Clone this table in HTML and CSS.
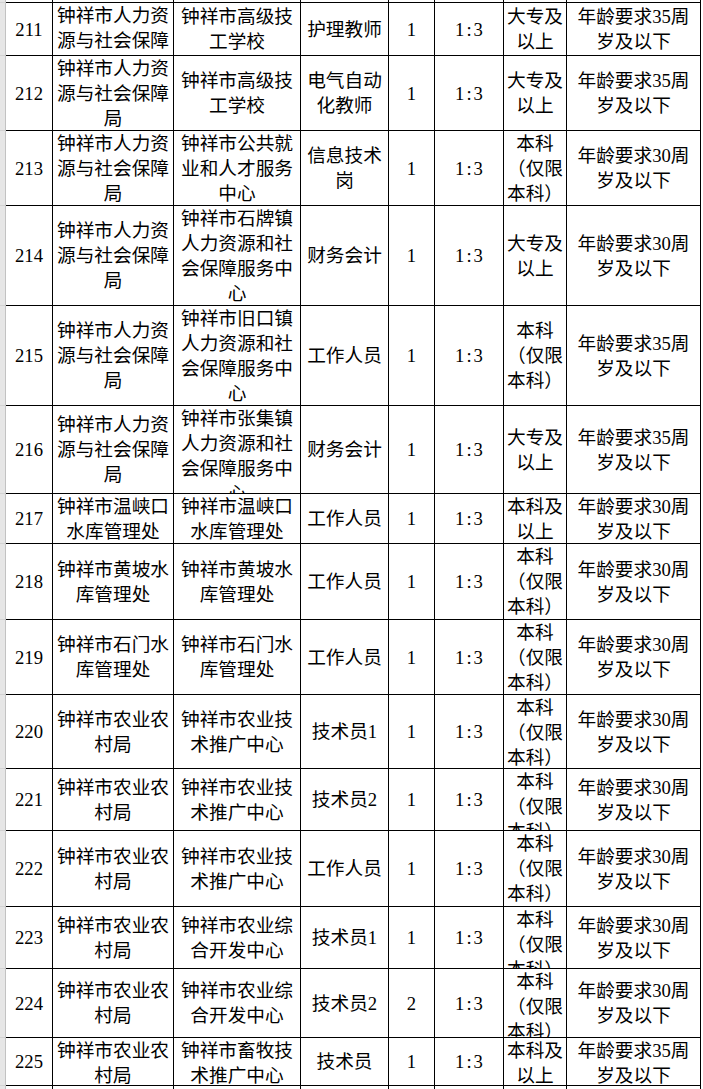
FILE: index.html
```html
<!DOCTYPE html>
<html lang="zh-CN">
<head>
<meta charset="utf-8">
<title>表格</title>
<link rel="stylesheet" href="styles.css">
</head>
<body>
<div class="sheet">
  <div class="g"></div><div class="c"></div><div class="c"></div><div class="c"></div><div class="c"></div><div class="c"></div><div class="c"></div><div class="c"></div><div class="c"></div>

  <div class="g"></div><div class="c"><span>211</span></div><div class="c"><span>钟祥市人力资源与社会保障局</span></div><div class="c"><span>钟祥市高级技工学校</span></div><div class="c"><span>护理教师</span></div><div class="c"><span>1</span></div><div class="c ratio"><span>1:3</span></div><div class="c"><span>大专及以上</span></div><div class="c"><span>年龄要求35周岁及以下</span></div>

  <div class="g"></div><div class="c"><span>212</span></div><div class="c"><span>钟祥市人力资源与社会保障局</span></div><div class="c"><span>钟祥市高级技工学校</span></div><div class="c"><span>电气自动化教师</span></div><div class="c"><span>1</span></div><div class="c ratio"><span>1:3</span></div><div class="c"><span>大专及以上</span></div><div class="c"><span>年龄要求35周岁及以下</span></div>

  <div class="g"></div><div class="c"><span>213</span></div><div class="c"><span>钟祥市人力资源与社会保障局</span></div><div class="c"><span>钟祥市公共就业和人才服务中心</span></div><div class="c"><span>信息技术岗</span></div><div class="c"><span>1</span></div><div class="c ratio"><span>1:3</span></div><div class="c"><span>本科（仅限本科）</span></div><div class="c"><span>年龄要求30周岁及以下</span></div>

  <div class="g"></div><div class="c"><span>214</span></div><div class="c"><span>钟祥市人力资源与社会保障局</span></div><div class="c"><span>钟祥市石牌镇人力资源和社会保障服务中心</span></div><div class="c"><span>财务会计</span></div><div class="c"><span>1</span></div><div class="c ratio"><span>1:3</span></div><div class="c"><span>大专及以上</span></div><div class="c"><span>年龄要求30周岁及以下</span></div>

  <div class="g"></div><div class="c"><span>215</span></div><div class="c"><span>钟祥市人力资源与社会保障局</span></div><div class="c"><span>钟祥市旧口镇人力资源和社会保障服务中心</span></div><div class="c"><span>工作人员</span></div><div class="c"><span>1</span></div><div class="c ratio"><span>1:3</span></div><div class="c"><span>本科（仅限本科）</span></div><div class="c"><span>年龄要求35周岁及以下</span></div>

  <div class="g"></div><div class="c"><span>216</span></div><div class="c"><span>钟祥市人力资源与社会保障局</span></div><div class="c"><span>钟祥市张集镇人力资源和社会保障服务中心</span></div><div class="c"><span>财务会计</span></div><div class="c"><span>1</span></div><div class="c ratio"><span>1:3</span></div><div class="c"><span>大专及以上</span></div><div class="c"><span>年龄要求35周岁及以下</span></div>

  <div class="g"></div><div class="c"><span>217</span></div><div class="c"><span>钟祥市温峡口水库管理处</span></div><div class="c"><span>钟祥市温峡口水库管理处</span></div><div class="c"><span>工作人员</span></div><div class="c"><span>1</span></div><div class="c ratio"><span>1:3</span></div><div class="c"><span>本科及以上</span></div><div class="c"><span>年龄要求30周岁及以下</span></div>

  <div class="g"></div><div class="c"><span>218</span></div><div class="c"><span>钟祥市黄坡水库管理处</span></div><div class="c"><span>钟祥市黄坡水库管理处</span></div><div class="c"><span>工作人员</span></div><div class="c"><span>1</span></div><div class="c ratio"><span>1:3</span></div><div class="c"><span>本科（仅限本科）</span></div><div class="c"><span>年龄要求30周岁及以下</span></div>

  <div class="g"></div><div class="c"><span>219</span></div><div class="c"><span>钟祥市石门水库管理处</span></div><div class="c"><span>钟祥市石门水库管理处</span></div><div class="c"><span>工作人员</span></div><div class="c"><span>1</span></div><div class="c ratio"><span>1:3</span></div><div class="c"><span>本科（仅限本科）</span></div><div class="c"><span>年龄要求30周岁及以下</span></div>

  <div class="g"></div><div class="c"><span>220</span></div><div class="c"><span>钟祥市农业农村局</span></div><div class="c"><span>钟祥市农业技术推广中心</span></div><div class="c"><span>技术员1</span></div><div class="c"><span>1</span></div><div class="c ratio"><span>1:3</span></div><div class="c"><span>本科（仅限本科）</span></div><div class="c"><span>年龄要求30周岁及以下</span></div>

  <div class="g"></div><div class="c"><span>221</span></div><div class="c"><span>钟祥市农业农村局</span></div><div class="c"><span>钟祥市农业技术推广中心</span></div><div class="c"><span>技术员2</span></div><div class="c"><span>1</span></div><div class="c ratio"><span>1:3</span></div><div class="c"><span>本科（仅限本科）</span></div><div class="c"><span>年龄要求30周岁及以下</span></div>

  <div class="g"></div><div class="c"><span>222</span></div><div class="c"><span>钟祥市农业农村局</span></div><div class="c"><span>钟祥市农业技术推广中心</span></div><div class="c"><span>工作人员</span></div><div class="c"><span>1</span></div><div class="c ratio"><span>1:3</span></div><div class="c"><span>本科（仅限本科）</span></div><div class="c"><span>年龄要求30周岁及以下</span></div>

  <div class="g"></div><div class="c"><span>223</span></div><div class="c"><span>钟祥市农业农村局</span></div><div class="c"><span>钟祥市农业综合开发中心</span></div><div class="c"><span>技术员1</span></div><div class="c"><span>1</span></div><div class="c ratio"><span>1:3</span></div><div class="c"><span>本科（仅限本科）</span></div><div class="c"><span>年龄要求30周岁及以下</span></div>

  <div class="g"></div><div class="c"><span>224</span></div><div class="c"><span>钟祥市农业农村局</span></div><div class="c"><span>钟祥市农业综合开发中心</span></div><div class="c"><span>技术员2</span></div><div class="c"><span>2</span></div><div class="c ratio"><span>1:3</span></div><div class="c"><span>本科（仅限本科）</span></div><div class="c"><span>年龄要求30周岁及以下</span></div>

  <div class="g"></div><div class="c"><span>225</span></div><div class="c"><span>钟祥市农业农村局</span></div><div class="c"><span>钟祥市畜牧技术推广中心</span></div><div class="c"><span>技术员</span></div><div class="c"><span>1</span></div><div class="c ratio"><span>1:3</span></div><div class="c"><span>本科及以上</span></div><div class="c"><span>年龄要求35周岁及以下</span></div>

  <div class="g"></div><div class="c"></div><div class="c"></div><div class="c"></div><div class="c"></div><div class="c"></div><div class="c"></div><div class="c"></div><div class="c"></div>
</div>
</body>
</html>
```

FILE: styles.css
```css
html, body {
  margin: 0;
  padding: 0;
  background: #fff;
  overflow: hidden;
}

.sheet {
  display: grid;
  grid-template-columns: 6px 47px 121px 127px 88px 46px 69px 63px 134px;
  grid-template-rows: 3px 53px 75px 75px 100px 100px 88px 50px 76px 75px 74px 62px 76px 62px 69px 48px 20px;
  width: 703px;
  font-family: "Liberation Serif", "Noto Sans CJK SC", serif;
  font-size: 18.67px;
  line-height: 25px;
  color: #000;
}

.g {
  box-sizing: border-box;
  background: #e6e6e6;
  border-right: 1px solid #c2c2c2;
  border-bottom: 1px solid #d2d2d2;
}

.c {
  box-sizing: border-box;
  display: flex;
  flex-direction: column;
  overflow: hidden;
  min-height: 0;
  padding: 0 2px;
  border-right: 1px solid #000;
  border-bottom: 1px solid #000;
  text-align: center;
}

.c > span {
  display: block;
  margin: auto 0;
  overflow: hidden;
  min-height: 0;
  flex-shrink: 1;
}

.ratio > span {
  letter-spacing: 2px;
  padding-left: 2px;
}
```
